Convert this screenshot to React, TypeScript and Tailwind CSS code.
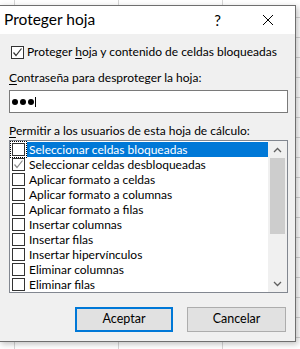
import React from "react";

const items = [
  "Seleccionar celdas bloqueadas",
  "Seleccionar celdas desbloqueadas",
  "Aplicar formato a celdas",
  "Aplicar formato a columnas",
  "Aplicar formato a filas",
  "Insertar columnas",
  "Insertar filas",
  "Insertar hipervínculos",
  "Eliminar columnas",
  "Eliminar filas",
];

function Check({ color = "#333" }: { color?: string }) {
  return (
    <svg width="13" height="13" viewBox="0 0 13 13" className="absolute left-0 top-0">
      <path d="M2.5 6.5 L5 9.5 L10.5 2.5" fill="none" stroke={color} strokeWidth="1.2" />
    </svg>
  );
}

function Box({ checked, checkColor, dotted }: { checked?: boolean; checkColor?: string; dotted?: boolean }) {
  return (
    <div className="relative w-[13px] h-[13px] shrink-0">
      <div className="absolute inset-0 border border-[#333] bg-white" />
      {checked && <Check color={checkColor} />}
      {dotted && <div className="absolute -inset-[2px] border border-dotted border-black" />}
    </div>
  );
}

export default function App() {
  const font = { fontFamily: 'Lato, "Noto Sans", sans-serif' };
  return (
    <div className="relative w-[300px] h-[349px] overflow-hidden bg-white" style={font}>
      {/* spreadsheet grid behind */}
      {[14, 118, 222].map((x) => (
        <div key={x} className="absolute top-0 bottom-0 w-px bg-[#d6d6d6]" style={{ left: x }} />
      ))}
      {[17, 37, 57, 77, 97, 117, 137, 157, 177, 197, 217, 237, 257, 277, 297, 317, 337].map((y) => (
        <div key={y} className="absolute left-0 right-0 h-px bg-[#d6d6d6]" style={{ top: y }} />
      ))}

      {/* dialog */}
      <div className="absolute left-[-1px] top-[5px] w-[297px] h-[337px] border border-[#6f6f6f] bg-[#f0f0f0] shadow-[2px_2px_6px_rgba(0,0,0,0.25)] flex flex-col text-[12px] text-black whitespace-nowrap">
        <div className="h-[28px] bg-white flex items-center shrink-0">
          <span className="ml-[4px] text-[15.5px] leading-none">Proteger hoja</span>
          <span className="ml-auto mr-[41px] text-[15px] leading-none">?</span>
          <svg width="12" height="12" viewBox="0 0 12 12" className="mr-[21px]">
            <path d="M1 1 L11 11 M11 1 L1 11" stroke="#000" strokeWidth="1" />
          </svg>
        </div>

        <div className="flex flex-col px-[9px]">
          <div className="flex items-center mt-[11px] ml-[2px] gap-[3px] h-[14px] leading-[14px]">
            <Box checked checkColor="#333" />
            <span>
              Proteger <u className="underline-offset-2">h</u>oja y contenido de celdas bloqueadas
            </span>
          </div>

          <div className="mt-[12px] h-[14px] leading-[14px]">
            <u className="underline-offset-2">C</u>ontraseña para desproteger la hoja:
          </div>

          <div className="mt-[5px] h-[23px] w-[279px] bg-white border border-[#7a7a7a] flex items-center pl-[2px]">
            <div className="flex items-center gap-[2px]">
              <div className="w-[6px] h-[6px] rounded-full bg-black" />
              <div className="w-[6px] h-[6px] rounded-full bg-black" />
              <div className="w-[6px] h-[6px] rounded-full bg-black" />
            </div>
            <div className="ml-[1px] w-px h-[10px] bg-black" />
          </div>

          <div className="mt-[11px] h-[14px] leading-[14px]">
            <u className="underline-offset-2">P</u>ermitir a los usuarios de esta hoja de cálculo:
          </div>

          <div className="mt-[2px] h-[153px] w-[279px] bg-white border border-[#828790] flex">
            <div className="flex-1 flex flex-col pt-[1px]">
              {items.map((t, i) => (
                <div key={t} className="h-[15px] flex items-center">
                  <div className="ml-[2px]">
                    <Box checked={i === 1} checkColor="#8a8a8a" dotted={i === 0} />
                  </div>
                  <div
                    className={
                      "h-[15px] flex items-center pl-[2px] ml-[2px] flex-1 leading-[15px] " +
                      (i === 0 ? "bg-[#0078d7] text-white" : "")
                    }
                  >
                    {t}
                  </div>
                </div>
              ))}
            </div>
            <div className="w-[19px] bg-[#f0f0f0] flex flex-col">
              <div className="h-[17px] flex items-center justify-center">
                <svg width="9" height="6" viewBox="0 0 9 6">
                  <path d="M1 5 L4.5 1.5 L8 5" fill="none" stroke="#606060" strokeWidth="1.3" />
                </svg>
              </div>
              <div className="h-[76px] mx-[2px] bg-[#cdcdcd]" />
              <div className="flex-1" />
              <div className="h-[17px] flex items-center justify-center">
                <svg width="9" height="6" viewBox="0 0 9 6">
                  <path d="M1 1 L4.5 4.5 L8 1" fill="none" stroke="#606060" strokeWidth="1.3" />
                </svg>
              </div>
            </div>
          </div>

          <div className="mt-[14px] flex justify-end gap-[14px] mr-[0px]">
            <button className="w-[98px] h-[25px] bg-[#e1e1e1] border-2 border-[#0078d7] text-[12.5px] leading-none">
              Aceptar
            </button>
            <button className="w-[99px] h-[25px] bg-[#e1e1e1] border border-[#adadad] text-[12.5px] leading-none">
              Cancelar
            </button>
          </div>
        </div>
      </div>
    </div>
  );
}
